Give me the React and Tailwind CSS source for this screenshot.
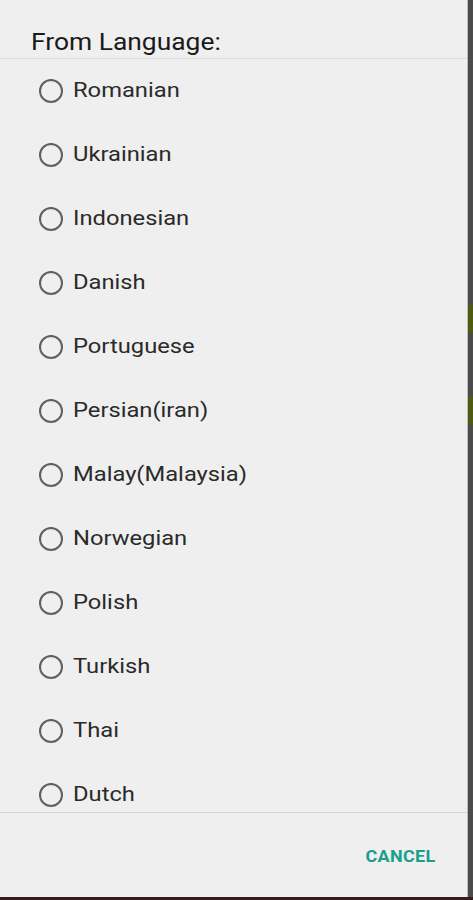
import React from "react";

const languages = [
  "Romanian",
  "Ukrainian",
  "Indonesian",
  "Danish",
  "Portuguese",
  "Persian(iran)",
  "Malay(Malaysia)",
  "Norwegian",
  "Polish",
  "Turkish",
  "Thai",
  "Dutch",
];

function Radio() {
  return <span className="w-[24px] h-[24px] rounded-full border-2 border-[#5f5f5f] shrink-0" />;
}

export default function App() {
  return (
    <div className="w-[473px] h-[900px] flex flex-col bg-[#3a1f1f] overflow-hidden font-['Roboto',sans-serif]">
      <div className="flex h-[897px]">
        {/* Dialog */}
        <div className="w-[467px] bg-[#efefef] flex flex-col">
          <div className="h-[59px] pl-[31px] pt-[27px] border-b border-[#dcdcdc]">
            <p className="text-[24px] leading-[30px] text-[#1a1a1a] origin-left scale-x-[1.1]">From Language:</p>
          </div>

          <div className="h-[754px] overflow-hidden border-b border-[#d6d6d6]">
            <ul>
              {languages.map((lang) => (
                <li key={lang} className="h-[64px] flex items-center pl-[39px] gap-[10px]">
                  <Radio />
                  <span className="text-[21px] text-[#2a2a2a] origin-left scale-x-[1.13]">{lang}</span>
                </li>
              ))}
            </ul>
          </div>

          <div className="flex-1 flex items-center justify-end pr-[32px]">
            <button className="text-[16px] font-bold tracking-[0.3px] text-[#17a08a] pt-[4px] origin-right scale-x-[1.12]">CANCEL</button>
          </div>
        </div>

        {/* Background peeking at the edge */}
        <div className="flex-1 flex flex-col bg-[#4b4b4b] border-l border-[#bdbdbd]">
          <div className="h-[305px]" />
          <div className="h-[28px] bg-[#4d5a12]" />
          <div className="h-[64px]" />
          <div className="h-[28px] bg-[#4d5a12]" />
          <div className="flex-1" />
        </div>
      </div>
      <div className="flex-1 bg-[#3a1a1c]" />
    </div>
  );
}
